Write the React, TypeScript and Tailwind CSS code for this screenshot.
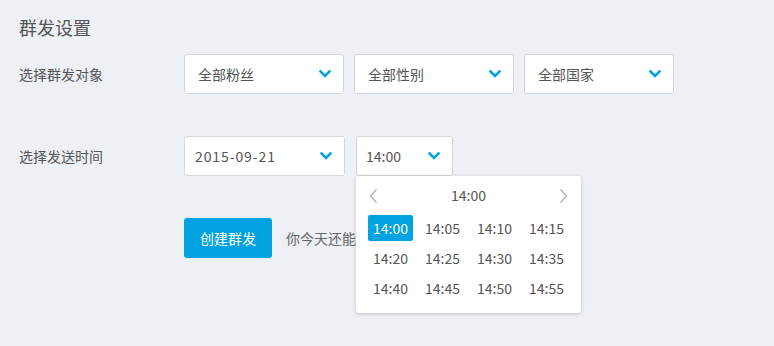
const font = { fontFamily: '"Noto Sans CJK SC", "Microsoft YaHei", sans-serif' };

function Chevron() {
  return (
    <svg width="12" height="8" viewBox="0 0 12 8" className="shrink-0">
      <path d="M1.5 1.5 L6 6 L10.5 1.5" fill="none" stroke="#00a3e0" strokeWidth="2.6" strokeLinecap="square" />
    </svg>
  );
}

function Select({ label, width, className = '' }: { label: string; width: string; className?: string }) {
  return (
    <div
      className={`flex h-10 items-center justify-between rounded-[3px] border border-[#d3d6dc] bg-white pr-[12px] text-[14px] text-[#555] ${width} ${className}`}
    >
      <span>{label}</span>
      <Chevron />
    </div>
  );
}

const times = ['14:00', '14:05', '14:10', '14:15', '14:20', '14:25', '14:30', '14:35', '14:40', '14:45', '14:50', '14:55'];

function TimePicker() {
  return (
    <div className="absolute left-0 top-full z-10 h-[137px] w-[225px] rounded-[3px] bg-white shadow-[0_1px_4px_rgba(0,0,0,0.18)]">
      <div className="flex h-[39px] items-center justify-between px-[13px] text-[14px] text-[#555]">
        <svg width="9" height="16" viewBox="0 0 9 16">
          <path d="M7.5 1.5 L1.5 8 L7.5 14.5" fill="none" stroke="#b5b9c2" strokeWidth="1.6" />
        </svg>
        <span>14:00</span>
        <svg width="9" height="16" viewBox="0 0 9 16">
          <path d="M1.5 1.5 L7.5 8 L1.5 14.5" fill="none" stroke="#b5b9c2" strokeWidth="1.6" />
        </svg>
      </div>
      <div className="grid grid-cols-[repeat(4,45px)] gap-x-[7px] gap-y-[4px] px-[12px]">
        {times.map((t, i) => (
          <div
            key={t}
            className={`flex h-[26px] items-center justify-center rounded-[2px] text-[14px] ${
              i === 0 ? 'bg-[#00a3e0] text-white' : 'text-[#555]'
            }`}
          >
            {t}
          </div>
        ))}
      </div>
    </div>
  );
}

export default function App() {
  return (
    <div className="h-[346px] w-[774px] bg-[#edf0f5] px-[19px] pt-[14px]" style={font}>
      <h1 className="text-[18px] leading-[26px] text-[#555]">群发设置</h1>

      <div className="mt-[14px] flex items-center">
        <div className="w-[165px] text-[14px] text-[#555]">选择群发对象</div>
        <Select label="全部粉丝" width="w-[160px] pl-[13px]" />
        <Select label="全部性别" width="w-[160px] pl-[13px]" className="ml-[10px]" />
        <Select label="全部国家" width="w-[150px] pl-[13px]" className="ml-[10px]" />
      </div>

      <div className="mt-[42px] flex items-center">
        <div className="w-[165px] text-[14px] text-[#555]">选择发送时间</div>
        <Select label="2015-09-21" width="w-[161px] pl-[10px] tracking-[0.9px]" />
        <div className="relative ml-[11px]">
          <Select label="14:00" width="w-[97px] pl-[9px]" />
          <TimePicker />
        </div>
      </div>

      <div className="mt-[42px] flex items-center pl-[165px]">
        <button className="h-10 w-[88px] rounded-[3px] bg-[#00a3e0] text-[14px] text-white">创建群发</button>
        <span className="ml-[14px] text-[14px] text-[#666]">你今天还能群发 1 条消息</span>
      </div>
    </div>
  );
}
